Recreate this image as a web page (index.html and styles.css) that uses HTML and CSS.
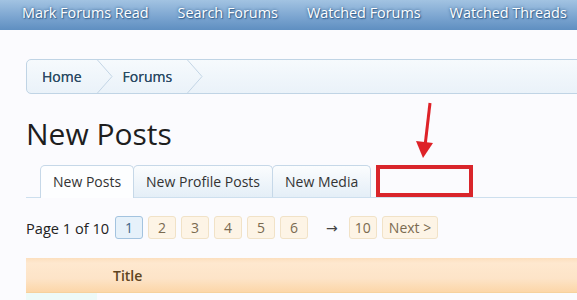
FILE: index.html
```html
<!DOCTYPE html>
<html>
<head>
    <title>New Posts</title>
    <link rel="stylesheet" href="styles.css">
</head>
<body>
    <div class="navbar">
        <a class="nav-link">Mark Forums Read</a>
        <a class="nav-link">Search Forums</a>
        <a class="nav-link">Watched Forums</a>
        <a class="nav-link">Watched Threads</a>
    </div>

    <div class="page">
        <div class="crumbs">
            <span class="crumb first">Home</span>
            <svg class="chevron" width="16" height="33" viewBox="0 0 16 33"><polyline points="0.5,0 15,16.5 0.5,33" fill="none" stroke="#c3d5e5" stroke-width="1"/></svg>
            <span class="crumb">Forums</span>
            <svg class="chevron" width="16" height="33" viewBox="0 0 16 33"><polyline points="0.5,0 15,16.5 0.5,33" fill="none" stroke="#c3d5e5" stroke-width="1"/></svg>
        </div>

        <h1 class="title">New Posts</h1>

        <div class="tabs">
            <span class="tab active">New Posts</span>
            <span class="tab">New Profile Posts</span>
            <span class="tab">New Media</span>
        </div>

        <div class="pagenav">
            <span class="page-label">Page 1 of 10</span>
            <a class="pg current">1</a>
            <a class="pg">2</a>
            <a class="pg">3</a>
            <a class="pg">4</a>
            <a class="pg">5</a>
            <a class="pg">6</a>
            <span class="skip">&rarr;</span>
            <a class="pg">10</a>
            <a class="pg next">Next &gt;</a>
        </div>

        <div class="list-head">
            <span class="icon-col"></span>
            <span class="title-col">Title</span>
        </div>
        <div class="list-row">
            <span class="row-icon"></span>
        </div>
    </div>

    <!-- annotation drawn over the screenshot -->
    <div class="mark-box"></div>
    <svg class="mark-arrow" width="30" height="60" viewBox="410 100 30 60">
        <line x1="430" y1="103" x2="425" y2="146" stroke="#de2228" stroke-width="3"/>
        <polygon points="416,141 433,143 423,158" fill="#de2228"/>
    </svg>
</body>
</html>
```

FILE: styles.css
```css
html, body {
    overflow: hidden;
}
body {
    margin: 0;
    background: #fbfbfe;
    font-family: "Open Sans", "DejaVu Sans", sans-serif;
    font-size: 14px;
    color: #222;
    position: relative;
}

.navbar {
    height: 30px;
    display: flex;
    gap: 29px;
    padding-left: 22px;
    background: linear-gradient(#a2c3e2, #79a3cf 60%, #5f8fc1);
}
.nav-link {
    color: #fff;
    line-height: 26px;
    font-size: 14.4px;
    white-space: nowrap;
    text-shadow: 0 0 3px #2c5a88, 1px 1px 1px #3b6894;
}

.page {
    width: 640px;
    padding-left: 26px;
}

.crumbs {
    margin-top: 29px;
    height: 33px;
    display: flex;
    border: 1px solid #c0d4e5;
    border-radius: 5px;
    background: linear-gradient(#f6fafd, #eaf2f9);
}
.crumb {
    line-height: 33px;
    padding: 0 15px 0 10px;
    color: #2b4a63;
    text-shadow: 0 0 0.5px #2b4a63;
}
.crumb.first {
    padding-left: 15px;
}

.title {
    margin: 22px 0 0;
    font-size: 30px;
    font-weight: normal;
    line-height: 36px;
    color: #1e1e1e;
}

.tabs {
    margin-top: 13px;
    padding-left: 14px;
    display: flex;
    border-bottom: 1px solid #cddfee;
}
.tab {
    height: 31px;
    line-height: 31px;
    padding: 0 12px;
    border: 1px solid #c6d8e8;
    border-bottom: none;
    border-radius: 5px 5px 0 0;
    background: linear-gradient(#fbfdfe, #e4eef7);
    color: #333;
    margin-right: -1px;
}
.tab.active {
    background: #fdfeff;
    margin-bottom: -1px;
    height: 32px;
    position: relative;
}

.pagenav {
    margin-top: 18px;
    display: flex;
    align-items: center;
    height: 23px;
}
.page-label {
    margin-right: 6px;
    font-size: 14.6px;
}
.pg {
    min-width: 26px;
    height: 21px;
    line-height: 21px;
    text-align: center;
    border: 1px solid #f1e2c7;
    border-radius: 3px;
    background: #fdf4e6;
    color: #7a6a50;
    margin-right: 5px;
    font-size: 14px;
}
.pg.current {
    border-color: #a3c3df;
    background: #e6f1fa;
    color: #3f6486;
}
.pg.next {
    padding: 0 6px;
    margin-right: 0;
}
.skip {
    margin: 0 11px 0 13px;
    color: #444;
}

.list-head {
    margin-top: 19px;
    height: 35px;
    display: flex;
    background: linear-gradient(#fcdfbe, #fee8cf 15%, #fde4c8 60%, #fcd6a8);
    border-bottom: 1px solid #f6d19d;
    box-sizing: border-box;
}
.icon-col {
    width: 80px;
}
.title-col {
    padding-left: 7px;
    line-height: 35px;
    font-weight: 600;
    color: #5e4420;
}

.list-row {
    height: 20px;
    display: flex;
}
.row-icon {
    width: 71px;
    background: #eefaf8;
}

.mark-box {
    position: absolute;
    left: 376px;
    top: 165px;
    width: 89px;
    height: 24px;
    border: 4px solid #d9252b;
}
.mark-arrow {
    position: absolute;
    left: 410px;
    top: 100px;
}
```
